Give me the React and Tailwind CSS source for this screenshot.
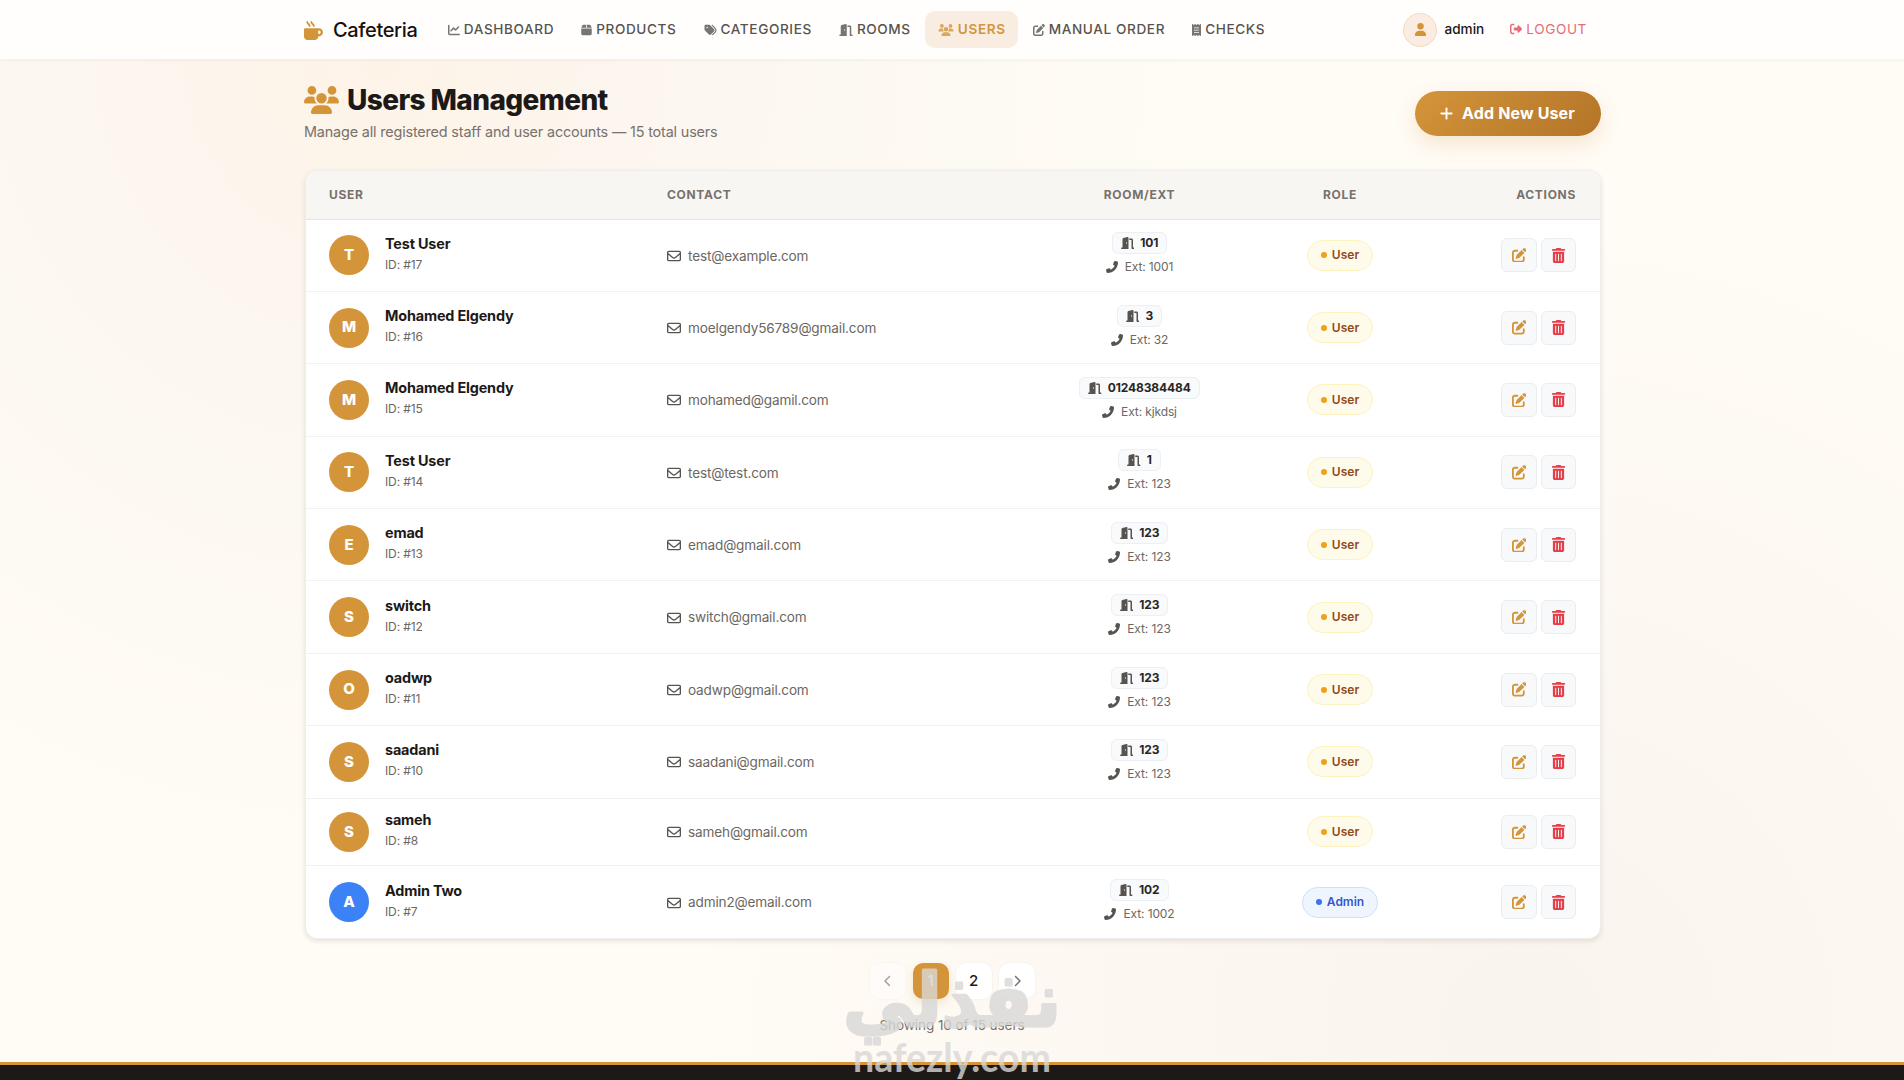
import React from 'react';
import {
  FaMugHot, FaChartLine, FaBox, FaTags, FaDoorOpen, FaUsers, FaPenToSquare, FaReceipt,
  FaUser, FaRightFromBracket, FaPlus, FaRegEnvelope, FaPhone, FaTrashCan, FaChevronLeft, FaChevronRight,
} from 'react-icons/fa6';

const navLinks = [
  { label: 'Dashboard', icon: FaChartLine, size: 'w-3' },
  { label: 'Products', icon: FaBox, size: 'w-[11px]' },
  { label: 'Categories', icon: FaTags, size: 'w-[13px]' },
  { label: 'Rooms', icon: FaDoorOpen, size: 'w-[14px]' },
  { label: 'Users', icon: FaUsers, size: 'w-4', active: true },
  { label: 'Manual Order', icon: FaPenToSquare, size: 'w-3' },
  { label: 'Checks', icon: FaReceipt, size: 'w-[9px]' },
];

const users = [
  { id: 17, name: 'Test User', email: 'test@example.com', room: '101', ext: '1001', role: 'User' },
  { id: 16, name: 'Mohamed Elgendy', email: 'moelgendy56789@gmail.com', room: '3', ext: '32', role: 'User' },
  { id: 15, name: 'Mohamed Elgendy', email: 'mohamed@gamil.com', room: '01248384484', ext: 'kjkdsj', role: 'User' },
  { id: 14, name: 'Test User', email: 'test@test.com', room: '1', ext: '123', role: 'User' },
  { id: 13, name: 'emad', email: 'emad@gmail.com', room: '123', ext: '123', role: 'User' },
  { id: 12, name: 'switch', email: 'switch@gmail.com', room: '123', ext: '123', role: 'User' },
  { id: 11, name: 'oadwp', email: 'oadwp@gmail.com', room: '123', ext: '123', role: 'User' },
  { id: 10, name: 'saadani', email: 'saadani@gmail.com', room: '123', ext: '123', role: 'User' },
  { id: 8, name: 'sameh', email: 'sameh@gmail.com', role: 'User' },
  { id: 7, name: 'Admin Two', email: 'admin2@email.com', room: '102', ext: '1002', role: 'Admin' },
];

const Navbar = () => (
  <nav className="h-[59px] bg-[#fffefd] shadow-[0_1px_4px_rgba(60,40,10,0.06)]">
    <div className="w-[1296px] h-full mx-auto flex items-center">
      <div className="flex items-center w-[131px] pt-px text-xl font-medium tracking-[-0.35px] text-[#151210]">
        <FaMugHot className="size-[19px] text-[#d4953a] mr-2.5" />
        Cafeteria
      </div>
      <div className="flex items-center gap-[1.5px]">
        {navLinks.map(({ label, icon: Icon, size, active }) => (
          <a
            key={label}
            href="#"
            className={
              active
                ? 'flex items-center gap-1 h-[37px] px-[12.8px] rounded-[10px] bg-[#f9ede1] text-[#d4953a] text-[13.6px] font-semibold uppercase tracking-[0.6px]'
                : 'flex items-center gap-1 h-[37px] px-[12.8px] text-[#57534e] text-[13.6px] font-medium uppercase tracking-[0.6px]'
            }
          >
            <Icon className={`h-3 ${size} opacity-80`} />
            {label}
          </a>
        ))}
      </div>
      <div className="ml-auto flex items-center pr-[13px]">
        <span className="size-[34px] rounded-full bg-[#faece0] border border-[#f0dcc0] flex items-center justify-center">
          <FaUser className="size-[13px] text-[#d4953a]" />
        </span>
        <span className="ml-[7px] mr-px text-[13.6px] font-medium text-[#1c1917]">admin</span>
        <a href="#" className="ml-[25px] flex items-center gap-1 text-[13.6px] uppercase tracking-[0.6px] text-[#e56d76]">
          <FaRightFromBracket className="size-3" />
          Logout
        </a>
      </div>
    </div>
  </nav>
);

const UserRow = ({ user }) => {
  const isAdmin = user.role === 'Admin';
  return (
    <tr className={user.room ? 'h-[72.4px] border-t border-[#f3f2f0]' : 'h-[67.6px] border-t border-[#f3f2f0]'}>
      <td className="pl-[23px]">
        <div className="flex items-center gap-4">
          <span
            className={
              isAdmin
                ? 'size-10 rounded-full bg-[#3b82f6] text-white text-[15px] font-extrabold flex items-center justify-center'
                : 'size-10 rounded-full bg-[#d4953a] text-white text-[15px] font-extrabold flex items-center justify-center'
            }
          >
            {user.name[0].toUpperCase()}
          </span>
          <div className="-mt-[3px]">
            <div className="text-[14.4px] leading-[22px] font-bold tracking-[-0.16px] text-[#1c1917]">{user.name}</div>
            <div className="text-xs leading-5 tracking-[-0.1px] text-[#6b6762]">ID: #{user.id}</div>
          </div>
        </div>
      </td>
      <td className="pl-6">
        <div className="flex items-center gap-[7px] pt-px text-[13.6px] tracking-[-0.16px] text-[#6b6762]">
          <FaRegEnvelope className="size-3.5 text-[#57534e]" />
          {user.email}
        </div>
      </td>
      <td>
        {user.room && (
          <div className="flex flex-col items-center">
            <span className="flex items-center gap-1.5 h-[22px] px-2 rounded-md border border-[#eceff3] bg-[#f8fafc] text-xs font-bold tracking-[-0.1px] text-[#292524]">
              <FaDoorOpen className="h-3 w-[13.5px] text-[#57534e]" />
              {user.room}
            </span>
            <span className="mt-0.5 flex items-center gap-[7px] text-xs leading-[22px] tracking-[-0.12px] text-[#6b6762]">
              <FaPhone className="size-3 -scale-x-100 text-[#57534e]" />
              Ext: {user.ext}
            </span>
          </div>
        )}
      </td>
      <td>
        <div
          className={
            isAdmin
              ? 'mx-auto w-fit flex items-center gap-[5px] h-[31px] px-[13px] rounded-full border border-[#cfe0fb] bg-[#eff5ff] text-xs font-semibold text-[#3656cf]'
              : 'mx-auto w-fit flex items-center gap-[5px] h-[31px] px-[13px] rounded-full border border-[#fdf3bf] bg-[#fffbea] text-xs font-semibold text-[#92491a]'
          }
        >
          <i className={isAdmin ? 'size-1.5 rounded-full bg-[#3b72ee]' : 'size-1.5 rounded-full bg-[#f0a01c]'} />
          {user.role}
        </div>
      </td>
      <td className="pr-6">
        <div className="flex justify-end gap-1">
          <button className="w-9 h-[34px] rounded-md border border-[#e9edf0] bg-[#f8f9fb] flex items-center justify-center">
            <FaPenToSquare className="size-[14.5px] text-[#d4953a]" />
          </button>
          <button className="w-[35px] h-[34px] rounded-md border border-[#e9edf0] bg-[#f8f9fb] flex items-center justify-center">
            <FaTrashCan className="size-[15px] text-[#e5404a]" />
          </button>
        </div>
      </td>
    </tr>
  );
};

const Pagination = () => (
  <div className="mt-6 flex flex-col items-center">
    <div className="flex gap-[7px] text-[15px] font-medium">
      <button className="size-9 rounded-[10px] bg-white/40 text-[#a8a29e] flex items-center justify-center shadow-[0_0_3px_rgba(0,0,0,0.04)]">
        <FaChevronLeft className="size-3" />
      </button>
      <button className="size-9 rounded-[10px] bg-[#d4953a] text-white flex items-center justify-center shadow-[0_4px_10px_rgba(212,149,58,0.2)]">1</button>
      <button className="size-9 rounded-[10px] bg-white text-[#1c1917] flex items-center justify-center shadow-[0_0_3px_rgba(0,0,0,0.05)]">2</button>
      <button className="size-9 rounded-[10px] bg-white text-[#78716c] flex items-center justify-center shadow-[0_0_3px_rgba(0,0,0,0.05)]">
        <FaChevronRight className="size-3" />
      </button>
    </div>
    <p className="mt-4 text-[13.6px] leading-5 tracking-[-0.1px] text-[#78716c]">Showing 10 of 15 users</p>
  </div>
);

const Watermark = () => (
  <svg className="absolute left-[840px] top-[950px] w-[224px] h-[130px] overflow-visible" viewBox="0 0 224 130" fill="#d8d8d7" opacity="0.8">
    <text x="112" y="76" textAnchor="middle" direction="rtl" fontFamily="DejaVu Sans" fontWeight="700" fontSize="74" textLength="218" lengthAdjust="spacingAndGlyphs" stroke="#d8d8d7" strokeWidth="3" strokeLinejoin="round">نفذلي</text>
    <text x="13" y="122" fontFamily="Lato, sans-serif" fontWeight="700" fontSize="40" textLength="198" lengthAdjust="spacingAndGlyphs">nafezly.com</text>
  </svg>
);

const App = () => (
  <div className="relative h-[1080px] overflow-hidden flex flex-col font-[Inter,sans-serif] bg-[#fffbf5] bg-[radial-gradient(circle_at_20%_5%,rgba(253,238,222,0.6),rgba(249,243,237,0.5)_18%,transparent_45%),radial-gradient(circle_at_80%_95%,rgba(249,242,236,0.8),transparent_45%)]">
    <Navbar />
    <main className="w-[1296px] mx-auto flex-1">
      <div className="h-[111px] pt-[22px] flex justify-between items-start">
        <div>
          <h1 className="flex items-center gap-2 text-[28px] leading-[38px] font-extrabold tracking-[-0.6px] text-[#1c1917]">
            <FaUsers className="h-7 w-[35px] text-[#d4953a]" />
            Users Management
          </h1>
          <p className="mt-[3px] text-[14.4px] leading-5 tracking-[-0.16px] text-[#78716c]">Manage all registered staff and user accounts — 15 total users</p>
        </div>
        <button className="mt-2.5 -mr-px w-[186px] h-[45px] pb-px pr-0.5 rounded-full bg-linear-135 from-[#d4953a] to-[#b37428] text-white text-base font-bold tracking-[0.15px] flex items-center justify-center gap-2 shadow-[0_8px_20px_rgba(212,149,58,0.2)]">
          <FaPlus className="size-[15px]" />
          Add New User
        </button>
      </div>

      <div className="ml-px -mr-px rounded-xl overflow-hidden bg-white border border-[#f0eeeb] shadow-[0_2px_5px_rgba(60,40,20,0.12)]">
        <table className="w-full table-fixed border-collapse">
          <colgroup>
            <col className="w-[337px]" />
            <col className="w-[400px]" />
            <col className="w-[193px]" />
            <col className="w-[208px]" />
            <col />
          </colgroup>
          <thead>
            <tr className="h-[48px] bg-[#f7f6f3] border-b border-[#e7e5e4] text-xs uppercase tracking-[0.7px] text-[#78716c]">
              <th className="pl-[23px] text-left">User</th>
              <th className="pl-6 text-left">Contact</th>
              <th>Room/Ext</th>
              <th>Role</th>
              <th className="pr-6 text-right">Actions</th>
            </tr>
          </thead>
          <tbody>
            {users.map((user) => <UserRow key={user.id} user={user} />)}
          </tbody>
        </table>
      </div>

      <Pagination />
    </main>
    <footer className="h-[18px] border-t-3 border-[#d4953a] bg-[#1c1917]" />
    <Watermark />
  </div>
);

export default App;
